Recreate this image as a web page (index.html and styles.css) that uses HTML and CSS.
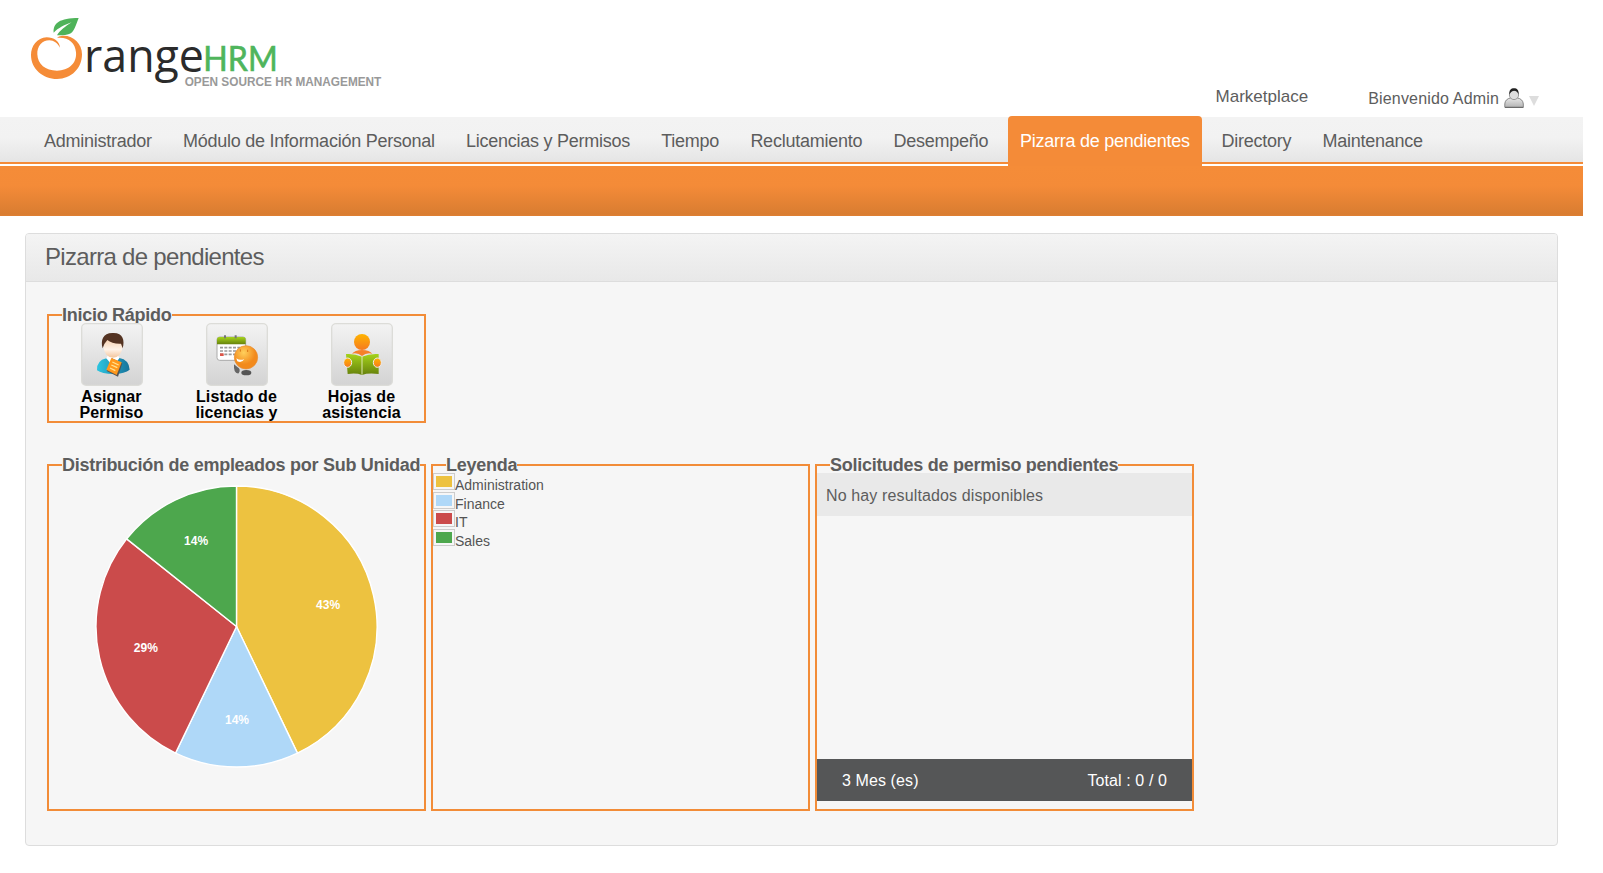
FILE: index.html
```
<!DOCTYPE html>
<html lang="es">
<head>
<meta charset="utf-8">
<title>OrangeHRM</title>
<link rel="stylesheet" href="styles.css">
</head>
<body>
<header class="branding">
  <svg class="logo" viewBox="0 0 1140 330" role="img" aria-label="OrangeHRM">
    <path class="leaf" d="M101 98C99 68 119 55 176 54C168 72 163 100 145 103C132 107 120 105 111 106C119 92 136 79 155 67C135 74 114 84 101 98Z"/>
    <path class="fruit" d="M120 143C119 124 101 112 80 112C51 113 33 139 33 165C33 207 69 237 111 237C154 237 186 205 186 163C186 130 160 105 127 107Q115 108 111 114C143 110 166 128 168 157C171 190 146 212 111 212C76 212 53 193 52 163C51 139 66 121 88 121C102 121 112 130 120 143Z"/>
    <text class="logo-range" x="192" y="215" textLength="360" lengthAdjust="spacingAndGlyphs">range</text>
    <text class="logo-hrm" x="550" y="213" textLength="223" lengthAdjust="spacingAndGlyphs">HRM</text>
    <text class="logo-tag" x="494" y="259" textLength="590" lengthAdjust="spacingAndGlyphs">OPEN SOURCE HR MANAGEMENT</text>
  </svg>
  <div class="account">
    <a class="market">Marketplace</a>
    <a class="welcome">Bienvenido Admin</a>
    <svg class="user" viewBox="0 0 20 20">
      <defs><linearGradient id="ug" x2="0" y2="1"><stop stop-color="#e8e8e8"/><stop offset="1" stop-color="#b4b4b4"/></linearGradient></defs>
      <path d="M.8 19.3V16Q1 11 7 9.8H13Q19 11 19.3 16V19.3Z" fill="url(#ug)" stroke="#888"/>
      <path d="M1 19.4H19.3" stroke="#666"/>
      <circle cx="10" cy="7" r="4.6" fill="#ddd" stroke="#999"/>
      <path d="M5.3 6.5C5 2 7 .2 10 .2S15 2 14.7 6.5Q13.5 3 10.3 2.7Q7 3 5.3 6.5Z" fill="#222"/>
    </svg>
    <svg class="caret" viewBox="0 0 10 10"><path d="M0 0H10L5 10Z" fill="#ddd"/></svg>
  </div>
</header>
<nav class="menu">
  <a>Administrador</a><a>Módulo de Información Personal</a><a>Licencias y Permisos</a><a>Tiempo</a><a>Reclutamiento</a><a>Desempeño</a><a class="current">Pizarra de pendientes</a><a>Directory</a><a>Maintenance</a>
</nav>
<div class="submenu"></div>
<main class="box">
  <h1 class="title">Pizarra de pendientes</h1>
  <div class="inner">
    <fieldset class="group quick">
      <legend>Inicio Rápido</legend>
      <div class="launchers">
        <a class="launcher">
          <svg class="tile" viewBox="0 0 186 189">
            <defs>
              <linearGradient id="tg" x2="0" y2="1"><stop stop-color="#f3f3f3"/><stop offset="1" stop-color="#d3d3d3"/></linearGradient>
              <linearGradient id="blue"><stop stop-color="#2cc5e0"/><stop offset="1" stop-color="#17739b"/></linearGradient>
              <linearGradient id="org" x2="0" y2="1"><stop stop-color="#ffb400"/><stop offset="1" stop-color="#f57a20"/></linearGradient>
              <linearGradient id="grn" x2="0" y2="1"><stop stop-color="#a5d31b"/><stop offset="1" stop-color="#66810c"/></linearGradient>
              <linearGradient id="face" x2="0" y2="1"><stop stop-color="#f5c9a4"/><stop offset=".6" stop-color="#fff3e8"/><stop offset="1" stop-color="#f3c59d"/></linearGradient>
              <radialGradient id="ball" cx=".4" cy=".3"><stop stop-color="#ffd05c"/><stop offset="1" stop-color="#f28a1c"/></radialGradient>
            </defs>
            <rect class="tile-bg" x="2" y="2" width="182" height="185" rx="13" fill="url(#tg)"/>
            <path d="M48 142Q46 113 76 106L97 119L115 105Q144 110 146 140Q132 152 98 153Q62 153 48 142Z" fill="url(#blue)"/>
            <path d="M76 106L97 132L115 105L107 91H84Z" fill="#fff"/>
            <ellipse cx="96" cy="73" rx="28" ry="31" fill="url(#face)"/>
            <path d="M65 76C58 52 66 29 96 30C126 29 132 52 125 76L120 62Q93 63 79 51Q70 60 65 76Z" fill="#543322"/>
            <path d="M93 106L124 121L111 161L77 144Z" fill="#555"/>
            <path d="M91 105L122 118L107 156L76 140Z" fill="#ff981c"/>
            <path d="M94 117L113 126M91 126L109 134M87 135L103 143" stroke="#ffe391" stroke-width="4"/>
          </svg>
          <span>Asignar Permiso</span>
        </a>
        <a class="launcher">
          <svg class="tile" viewBox="0 0 186 189">
            <rect class="tile-bg" x="2" y="2" width="182" height="185" rx="13" fill="url(#tg)"/>
            <rect x="33" y="42" width="86" height="70" rx="8" fill="#fff" stroke="#aaa" stroke-width="3"/>
            <path d="M33 64V50Q33 42 41 42H111Q119 42 119 50V64Z" fill="url(#grn)"/>
            <path d="M57 37V46M89 37V46" stroke="#777" stroke-width="6"/>
            <path d="M42 74H108M42 84H108M42 94H90" stroke="#999" stroke-width="5" stroke-dasharray="9 4"/>
            <path d="M42 95H53" stroke="#dd5649" stroke-width="8"/>
            <path d="M84 124Q82 153 98 151Q106 139 94 132Z" fill="#666"/>
            <ellipse cx="121" cy="149" rx="15" ry="8" fill="#555"/>
            <circle cx="120" cy="103" r="35" fill="url(#ball)" stroke="#e88c32" stroke-width="2"/>
            <path d="M91 106Q103 114 115 108Q108 121 94 115Z" fill="#fff"/>
            <path d="M103 86V79M125 80V87" stroke="#d77616" stroke-width="3"/>
          </svg>
          <span>Listado de licencias y</span>
        </a>
        <a class="launcher">
          <svg class="tile" viewBox="0 0 186 189">
            <rect class="tile-bg" x="2" y="2" width="182" height="185" rx="13" fill="url(#tg)"/>
            <circle cx="93" cy="57" r="24" fill="url(#org)"/>
            <path d="M63 92Q71 82 93 81Q116 82 124 92Q106 88 93 99Q80 88 63 92Z" fill="#f58029"/>
            <path d="M45 93Q70 91 93 101Q116 91 143 93V153Q111 149 93 156Q76 149 50 153Z" fill="url(#grn)"/>
            <path d="M93 99V155" stroke="#dce6af" stroke-width="3"/>
            <ellipse cx="50" cy="119" rx="12" ry="14" fill="url(#org)" stroke="#eee" stroke-width="3"/>
            <ellipse cx="139" cy="119" rx="12" ry="14" fill="url(#org)" stroke="#eee" stroke-width="3"/>
          </svg>
          <span>Hojas de asistencia</span>
        </a>
      </div>
    </fieldset>
    <div class="row">
      <fieldset class="group tall">
        <legend>Distribución de empleados por Sub Unidad</legend>
        <svg class="pie" viewBox="-142 -142 284 284">
          <g stroke="#fff" stroke-width="1.4">
            <path d="M0 0V-140A140 140 0 0 1 60.74 126.14Z" fill="#edc240"/>
            <path d="M0 0L60.74 126.14A140 140 0 0 1 -60.74 126.14Z" fill="#afd8f8"/>
            <path d="M0 0L-60.74 126.14A140 140 0 0 1 -109.46 -87.29Z" fill="#cb4b4b"/>
            <path d="M0 0L-109.46 -87.29A140 140 0 0 1 0 -140Z" fill="#4da74d"/>
          </g>
          <g class="pie-labels">
            <text x="91.3" y="-17.8">43%</text>
            <text x="0.5" y="97">14%</text>
            <text x="-90.3" y="25">29%</text>
            <text x="-40.3" y="-81">14%</text>
          </g>
        </svg>
      </fieldset>
      <fieldset class="group tall">
        <legend>Leyenda</legend>
        <ul class="key">
          <li><i class="swatch gold"></i>Administration</li>
          <li><i class="swatch sky"></i>Finance</li>
          <li><i class="swatch red"></i>IT</li>
          <li><i class="swatch green"></i>Sales</li>
        </ul>
      </fieldset>
      <fieldset class="group tall">
        <legend>Solicitudes de permiso pendientes</legend>
        <div class="requests">
          <div class="empty">No hay resultados disponibles</div>
          <div class="totals"><span>3 Mes (es)</span><span>Total : 0 / 0</span></div>
        </div>
      </fieldset>
    </div>
  </div>
</main>
</body>
</html>
```
FILE: styles.css
```
* { box-sizing: border-box; }
body { margin: 0; width: 1583px; background: #fff; color: #5d5d5d; font-family: "Liberation Sans", Arial, sans-serif; font-size: 16px; }
.branding { height: 117px; display: flex; justify-content: space-between; padding-left: 20px; }
.logo { width: 380px; height: 110px; flex: none; }
.leaf { fill: #4fb35a; }
.fruit { fill: #f58c38; }
.logo-range { font-family: "Open Sans", sans-serif; font-size: 137px; fill: #2b2b2b; }
.logo-hrm { font-family: Lato, sans-serif; font-size: 105px; fill: #4fb55c; stroke: #4fb55c; stroke-width: 2px; }
.logo-tag { font-size: 36px; font-weight: bold; fill: #999; }
.account { display: flex; align-items: flex-start; padding: 87px 44px 0 0; line-height: 20px; white-space: nowrap; }
.market { margin: 0 60px 0 0; font-size: 17px; }
.welcome { margin: 2px 5px 0 0; letter-spacing: 0.17px; }
.user { width: 20px; height: 20px; margin: 1px 5px 0 0; }
.caret { width: 10px; height: 10px; margin-top: 9px; }
.menu { height: 47px; display: flex; gap: 7.25px; padding-left: 32px; font-size: 18px; line-height: 48px; letter-spacing: -0.25px; white-space: nowrap; background: linear-gradient(#f3f3f3 0, #f2f2f2 45%, #e5e5e5 100%); border-bottom: 2px solid #f48b38; }
.menu a { padding: 0 12px; height: 45px; }
.menu .current { height: 50px; margin-top: -1px; padding: 1px 12.4px 0; background: #f48b38; color: #fff; border-radius: 4px 4px 0 0; }
.submenu { height: 50px; margin-top: 2px; background: linear-gradient(#f58c38 0, #f48b38 40%, #d97d31 96%, #df8033 100%); }
.box { width: 1533px; height: 613px; margin: 17px 0 0 25px; background: #f6f6f6; border: 1px solid #ddd; border-radius: 4px; }
.title { margin: 0; height: 48px; padding-left: 19px; font-weight: normal; font-size: 24px; line-height: 45px; letter-spacing: -0.7px; background: linear-gradient(#f4f4f4, #e8e8e8); border-bottom: 1px solid #ddd; border-radius: 3px 3px 0 0; }
.inner { padding: 23px 21px 0; }
.group { width: 379px; margin: 0; padding: 0; border: 2px solid #f28c38; min-width: 0; }
.group legend { margin-left: 13px; padding: 0; font-size: 18px; font-weight: bold; line-height: 20px; height: 20px; white-space: nowrap; letter-spacing: -0.27px; }
.quick { height: 118px; }
.launchers { display: flex; margin-top: -2px; }
.launcher { width: 125px; display: flex; flex-direction: column; align-items: center; color: #000; font-weight: bold; line-height: 16px; text-align: center; }
.launcher span { width: 90px; margin-top: 3px; letter-spacing: 0.1px; }
.tile { width: 62px; height: 63px; }
.tile-bg { stroke: #dcdcd8; stroke-width: 4px; }
.row { display: flex; gap: 5px; margin-top: 32px; }
.tall { height: 356px; }
.pie { display: block; width: 285px; height: 285px; margin: 9px 0 0 45px; }
.pie-labels { fill: #fff; font-size: 12px; font-weight: bold; text-anchor: middle; }
.key { list-style: none; margin: -2px 0 0; padding: 0; font-size: 14px; color: #545454; }
.key li { display: flex; height: 18.67px; line-height: 24px; }
.swatch { width: 22px; height: 17px; border: 1px solid #ccc; padding: 2px; background: content-box #000; }
.gold { background-color: #edc240; }
.sky { background-color: #afd8f8; }
.red { background-color: #cb4b4b; }
.green { background-color: #4da74d; }
.requests { height: 328px; display: flex; flex-direction: column; justify-content: space-between; margin-top: -2px; }
.empty { height: 43px; padding-left: 9px; line-height: 46px; letter-spacing: 0.13px; background: #e9e9e9; }
.totals { height: 42px; display: flex; justify-content: space-between; padding: 0 25px; line-height: 44px; letter-spacing: 0.1px; background: #555657; color: #fff; }
```
